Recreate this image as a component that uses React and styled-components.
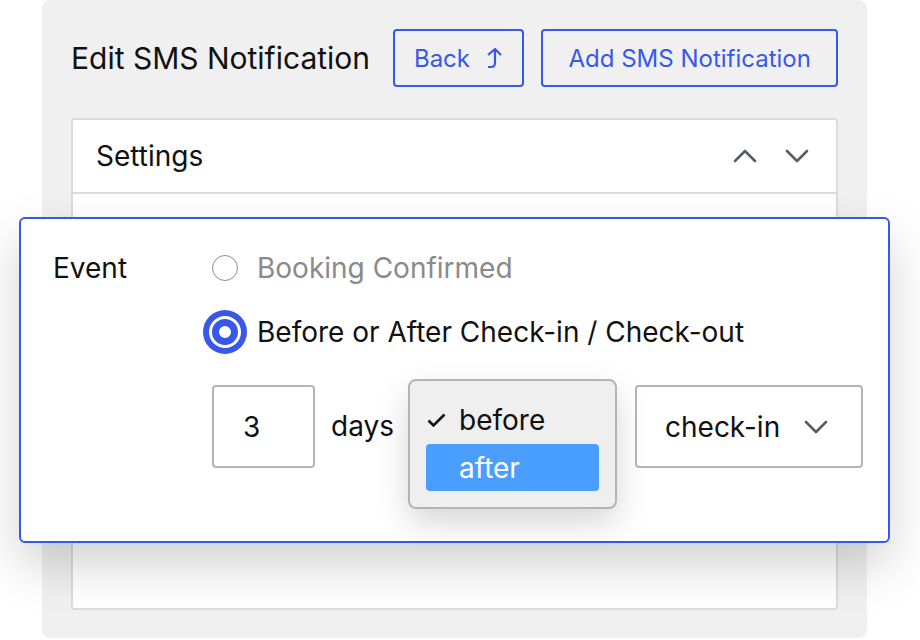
import React from 'react';
import styled, { createGlobalStyle } from 'styled-components';

const GlobalStyle = createGlobalStyle`
  html, body {
    margin: 0;
    padding: 0;
    background: #ffffff;
  }
  body {
    font-family: Inter, 'Noto Sans', sans-serif;
    color: #1e1e1e;
  }
`;

const BLUE = '#3858e9';

const Page = styled.div`
  position: relative;
  width: 920px;
  height: 640px;
  overflow: hidden;
`;

const Panel = styled.div`
  box-sizing: border-box;
  margin-left: 42px;
  width: 825px;
  height: 638px;
  background: #f0f0f0;
  border-radius: 8px;
  padding: 29px 29px 28px 29px;
  display: flex;
  flex-direction: column;
`;

const Header = styled.div`
  display: flex;
  align-items: center;
  height: 58px;
`;

const Title = styled.h1`
  width: 322px;
  margin: 0;
  font-size: 30px;
  font-weight: 400;
  color: #111;
  white-space: nowrap;
`;

const OutlineButton = styled.button`
  box-sizing: border-box;
  height: 58px;
  width: ${p => p.$width}px;
  margin-left: ${p => p.$gap || 0}px;
  display: inline-flex;
  align-items: center;
  justify-content: center;
  gap: 15px;
  background: transparent;
  border: 2px solid ${BLUE};
  border-radius: 4px;
  color: ${BLUE};
  font-family: Inter, sans-serif;
  font-size: 24px;
  padding: 0;
`;

const SettingsCard = styled.div`
  box-sizing: border-box;
  margin-top: 31px;
  flex: 1;
  background: #fff;
  border: 2px solid #dcdcdc;
  border-radius: 4px;
  display: flex;
  flex-direction: column;
`;

const CardHeader = styled.div`
  height: 74px;
  box-sizing: border-box;
  border-bottom: 2px solid #dcdcdc;
  display: flex;
  align-items: center;
  padding: 0 27px 0 23px;
  font-size: 28px;
  color: #111;
`;

const CardTitle = styled.span`
  flex: 1;
`;

const Arrows = styled.div`
  display: flex;
  align-items: center;
  gap: 28px;
  color: #555d66;
`;

const Overlay = styled.div`
  position: absolute;
  left: 19px;
  top: 217px;
  width: 871px;
  height: 326px;
  box-sizing: border-box;
  background: #fff;
  border: 2px solid ${BLUE};
  border-radius: 6px;
  box-shadow: 0 22px 50px rgba(0, 0, 0, 0.18);
  padding: 31px 0 0 32px;
  display: flex;
`;

const Label = styled.div`
  width: 159px;
  height: 36px;
  line-height: 36px;
  font-size: 28px;
  color: #111;
`;

const Options = styled.div`
  display: flex;
  flex-direction: column;
`;

const OptionRow = styled.label`
  display: flex;
  align-items: center;
  height: 36px;
  margin-top: ${p => p.$top || 0}px;
  gap: 19px;
  font-size: 28px;
  white-space: nowrap;
  color: ${p => (p.$muted ? '#8a8a8a' : '#111')};
`;

const Radio = styled.span`
  box-sizing: border-box;
  width: 26px;
  height: 26px;
  border-radius: 50%;
  flex-shrink: 0;
  border: ${p => (p.$checked ? `7px solid ${BLUE}` : '1.5px solid #8c8c8c')};
  background: #fff;
  box-shadow: ${p => (p.$checked ? `0 0 0 3px #fff, 0 0 0 9px ${BLUE}` : 'none')};
`;

const TimingRow = styled.div`
  display: flex;
  align-items: flex-start;
  margin-top: 35px;
`;

const Field = styled.div`
  box-sizing: border-box;
  width: ${p => p.$width}px;
  height: 83px;
  flex-shrink: 0;
  border: 2px solid #b4b4b4;
  border-radius: 4px;
  display: flex;
  align-items: center;
  padding: 0 ${p => p.$padRight || 0}px 0 ${p => p.$padLeft}px;
  font-size: 28px;
  color: #111;
`;

const FieldText = styled.span`
  flex: 1;
`;

const FieldIcon = styled.span`
  display: flex;
  color: #555d66;
`;

const Unit = styled.span`
  width: 62px;
  height: 83px;
  line-height: 83px;
  margin: 0 15px 0 16px;
  font-size: 28px;
  color: #111;
`;

const Menu = styled.div`
  box-sizing: border-box;
  width: 209px;
  height: 130px;
  flex-shrink: 0;
  margin: -6px 18px 0 0;
  background: #efefef;
  border: 2px solid #b4b4b4;
  border-radius: 8px;
  padding: 16px 16px;
  display: flex;
  flex-direction: column;
  gap: 1px;
  box-shadow: 0 14px 32px rgba(0, 0, 0, 0.16);
`;

const MenuItem = styled.div`
  height: ${p => (p.$active ? 47 : 46)}px;
  border-radius: 4px;
  display: flex;
  align-items: center;
  font-size: 28px;
  padding-left: ${p => (p.$active ? 33 : 1)}px;
  gap: 13px;
  background: ${p => (p.$active ? '#4a9eff' : 'transparent')};
  color: ${p => (p.$active ? '#fff' : '#111')};
`;

const Chevron = ({ up }) => (
  <svg width="24" height="14" viewBox="0 0 24 14" fill="none">
    <polyline
      points={up ? '2,12 12,2 22,12' : '2,2 12,12 22,2'}
      stroke="currentColor"
      strokeWidth="2.6"
      strokeLinecap="round"
      strokeLinejoin="round"
    />
  </svg>
);

const BackArrow = () => (
  <svg width="18" height="22" viewBox="0 0 18 22" fill="none">
    <polyline points="3,8 10,2 16,8" stroke="currentColor" strokeWidth="2.2" strokeLinejoin="round" />
    <path d="M10 2 V16 Q10 20 6 20 H3" stroke="currentColor" strokeWidth="2.2" />
  </svg>
);

const Check = () => (
  <svg width="19" height="15" viewBox="0 0 19 15" fill="none">
    <polyline points="1.5,7.5 6.5,12.5 17.5,1.5" stroke="#111" strokeWidth="2.6" />
  </svg>
);

const App = () => {
  return (
    <Page>
      <GlobalStyle />
      <Panel>
        <Header>
          <Title>Edit SMS Notification</Title>
          <OutlineButton $width={132}>
            Back <BackArrow />
          </OutlineButton>
          <OutlineButton $width={297} $gap={17}>
            Add SMS Notification
          </OutlineButton>
        </Header>
        <SettingsCard>
          <CardHeader>
            <CardTitle>Settings</CardTitle>
            <Arrows>
              <Chevron up />
              <Chevron />
            </Arrows>
          </CardHeader>
        </SettingsCard>
      </Panel>

      <Overlay>
        <Label>Event</Label>
        <Options>
          <OptionRow $muted>
            <Radio />
            Booking Confirmed
          </OptionRow>
          <OptionRow $top={28}>
            <Radio $checked />
            Before or After Check-in / Check-out
          </OptionRow>
          <TimingRow>
            <Field $width={103} $padLeft={29}>
              3
            </Field>
            <Unit>days</Unit>
            <Menu>
              <MenuItem>
                <Check />
                before
              </MenuItem>
              <MenuItem $active>after</MenuItem>
            </Menu>
            <Field $width={228} $padLeft={28} $padRight={33}>
              <FieldText>check-in</FieldText>
              <FieldIcon>
                <Chevron />
              </FieldIcon>
            </Field>
          </TimingRow>
        </Options>
      </Overlay>
    </Page>
  );
};

export default App;
